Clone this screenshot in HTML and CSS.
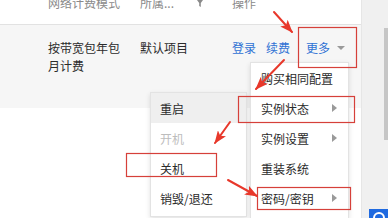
FILE: index.html
```html
<!DOCTYPE html>
<html lang="zh-CN">
<head>
<meta charset="utf-8">
<link rel="stylesheet" href="styles.css">
</head>
<body>
<div class="page">
  <div class="table">
    <div class="thead">
      <span class="th c1">网络计费模式</span>
      <span class="th c2"><span>所属...</span><svg class="funnel" width="6" height="7" viewBox="0 0 6 7"><path d="M0 0H6L3.8 3V7L2.2 6V3Z" fill="#8a8a8a"/></svg></span>
      <span class="th c3">操作</span>
    </div>
    <div class="trow">
      <div class="td c1"><span class="wrap">按带宽包年包月计费</span></div>
      <div class="td c2">默认项目</div>
      <div class="td c3 links">
        <a class="lk">登录</a>
        <a class="lk gap2">续费</a>
        <a class="lk">更多</a><i class="caret"></i>
      </div>
    </div>
  </div>
  <div class="side"><div class="thumb"></div></div>

  <div class="menu menu-sub">
    <div class="item active">重启</div>
    <div class="item disabled">开机</div>
    <div class="item">关机</div>
    <div class="item">销毁/退还</div>
  </div>

  <div class="menu menu-main">
    <div class="item">购买相同配置</div>
    <div class="item">实例状态<i class="tri"></i></div>
    <div class="item">实例设置<i class="tri"></i></div>
    <div class="item">重装系统</div>
    <div class="item">密码/密钥<i class="tri"></i></div>
  </div>

  <div class="fab"><span class="ring"></span></div>

  <svg class="marks" width="388" height="218" viewBox="0 0 388 218">
    <defs>
      <marker id="ah" markerUnits="userSpaceOnUse" markerWidth="13" markerHeight="10" refX="12" refY="5" orient="auto">
        <path d="M0 0L13 5L0 10L3 5Z" fill="#e8382b"/>
      </marker>
    </defs>
    <g fill="none" stroke="#d6403a" stroke-width="1.2">
      <rect x="298.5" y="27.5" width="58" height="40"/>
      <rect x="238.5" y="96.5" width="116" height="26"/>
      <rect x="126.5" y="153.5" width="90" height="23"/>
      <rect x="257.5" y="187.5" width="93" height="22"/>
    </g>
    <g stroke="#e8382b" stroke-width="2" stroke-linecap="round">
      <line x1="274" y1="12" x2="292" y2="32" marker-end="url(#ah)"/>
      <line x1="284" y1="60" x2="256" y2="89" marker-end="url(#ah)"/>
      <line x1="230" y1="122" x2="215" y2="143" marker-end="url(#ah)"/>
      <line x1="228" y1="180" x2="257" y2="196" marker-end="url(#ah)"/>
    </g>
  </svg>
</div>
</body>
</html>
```

FILE: styles.css
```css
* { box-sizing: border-box; margin: 0; padding: 0; }
html, body { width: 388px; height: 218px; overflow: hidden; background: #fff; }
body {
  font-family: "Noto Sans CJK SC", "Noto Sans", "Liberation Sans", sans-serif;
  font-size: 12px;
  color: #2b2b2b;
}
.page { position: relative; display: flex; width: 388px; height: 218px; overflow: hidden; }
.table { width: 362px; height: 218px; border-right: 1px solid #e6e6e6; background: #fff; }
.thead {
  display: flex;
  height: 25px;
  padding-left: 48px;
  border-bottom: 1px solid #e2e2e2;
}
.th { line-height: 12px; margin-top: -3px; color: #8a8a8a; }
.c1 { width: 92px; }
.c2 { width: 92px; }
.th.c2 { display: flex; align-items: flex-start; padding-right: 29px; }
.funnel { margin-left: auto; margin-top: 3px; }
.trow {
  display: flex;
  height: 83px;
  padding: 14px 0 0 48px;
  background: #f6f6f6;
  line-height: 18px;
}
.wrap { display: block; width: 78px; }
.links { display: flex; align-items: flex-start; }
.lk { color: #2f72d4; }
.links .lk:first-child { margin-right: 10px; }
.gap2 { margin-right: 16px; }
.caret {
  width: 0; height: 0; margin: 7px 0 0 7px;
  border-left: 4px solid transparent;
  border-right: 4px solid transparent;
  border-top: 4px solid #9a9a9a;
}
.side { position: relative; flex: 1; background: #f0f0f0; }
.thumb { position: absolute; right: 0; top: 28px; width: 4px; height: 112px; background: #c6c6c6; }

.menu {
  position: absolute;
  background: #fff;
  border: 1px solid #e3e3e3;
  box-shadow: 0 2px 5px rgba(0,0,0,0.12);
}
.menu-main { left: 250px; top: 62px; width: 99px; height: 156px; border-bottom: 0; }
.menu-sub { left: 150px; top: 92px; width: 97px; padding-bottom: 3px; }
.item {
  display: flex;
  align-items: center;
  justify-content: space-between;
  height: 30px;
  color: #2b2b2b;
  white-space: nowrap;
}
.menu-main .item { padding: 0 11px 0 10px; }
.menu-sub .item { padding: 0 10px 0 9px; }
.item.active { background: #efefef; }
.item.disabled { color: #bdbdbd; }
.tri {
  width: 0; height: 0;
  border-top: 4px solid transparent;
  border-bottom: 4px solid transparent;
  border-left: 5px solid #9a9a9a;
}
.fab {
  position: absolute; left: 369px; top: 209px; width: 19px; height: 9px;
  background: #1f6ae0; overflow: hidden;
}
.ring {
  position: absolute; left: 4px; top: 3px; width: 12px; height: 12px;
  border: 2px solid #fff; border-radius: 50%;
}
.marks { position: absolute; left: 0; top: 0; pointer-events: none; }
```
